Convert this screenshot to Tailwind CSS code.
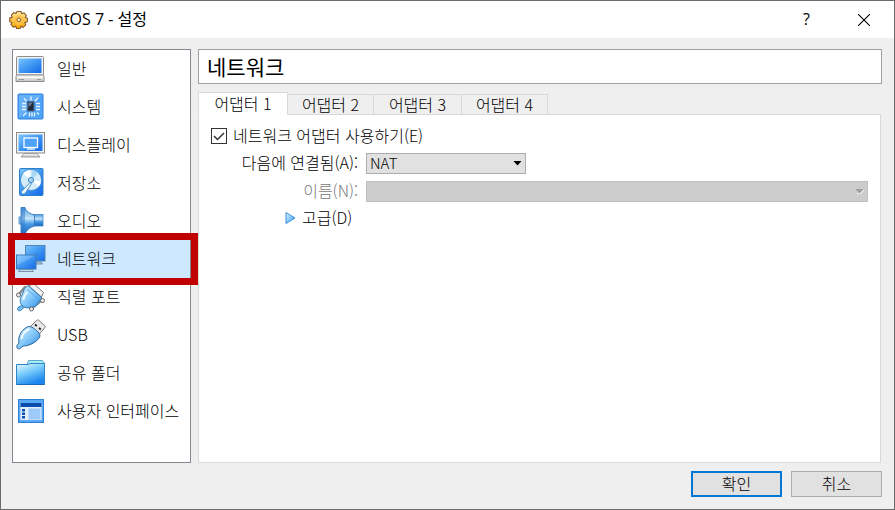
<!DOCTYPE html>
<html lang="ko">
<head>
    <meta charset="UTF-8">
    <meta name="viewport" content="width=device-width, initial-scale=1.0">
    <title>CentOS 7 - 설정</title>
    <script src="https://cdn.jsdelivr.net/npm/@tailwindcss/browser@4"></script>
</head>
<body class="h-screen flex flex-col border border-[#6b6b6b] bg-[#efefef] text-black text-base leading-6 font-light font-['Noto_Sans_CJK_KR',sans-serif]">

    <!-- Shared gradients for the icons -->
    <svg class="absolute size-0" aria-hidden="true">
        <defs>
            <linearGradient id="blue" x1="0" y1="0" x2="1" y2="1">
                <stop offset="0" stop-color="#7cc4fb"/>
                <stop offset="0.5" stop-color="#3f97f2"/>
                <stop offset="1" stop-color="#1268e8"/>
            </linearGradient>
            <linearGradient id="sky" x1="0" y1="0" x2="1" y2="1">
                <stop offset="0" stop-color="#e2f5ff"/>
                <stop offset="0.5" stop-color="#86cafa"/>
                <stop offset="1" stop-color="#2a86e0"/>
            </linearGradient>
            <linearGradient id="cone" x1="0" y1="0" x2="0" y2="1">
                <stop offset="0" stop-color="#4f9be0"/>
                <stop offset="0.4" stop-color="#c5e6fb"/>
                <stop offset="0.6" stop-color="#4a9be4"/>
                <stop offset="1" stop-color="#1462bd"/>
            </linearGradient>
            <linearGradient id="folder" x1="0" y1="0" x2="0.5" y2="1">
                <stop offset="0" stop-color="#f0fbff"/>
                <stop offset="0.45" stop-color="#7fd0fb"/>
                <stop offset="1" stop-color="#1a86ee"/>
            </linearGradient>
            <linearGradient id="metal" x1="0" y1="0" x2="0" y2="1">
                <stop offset="0" stop-color="#fdfdfd"/>
                <stop offset="1" stop-color="#c4c4c4"/>
            </linearGradient>
            <linearGradient id="gold" x1="0" y1="0" x2="0" y2="1">
                <stop offset="0" stop-color="#ffe9a0"/>
                <stop offset="1" stop-color="#f5a300"/>
            </linearGradient>
        </defs>
    </svg>

    <!-- Title bar -->
    <header class="h-[37px] shrink-0 bg-white flex items-center pl-2">
        <svg class="size-5" viewBox="0 0 20 20">
            <path d="M8 1.5l4 0 .7 2.2 2.3-.9 2.4 2.8-1.2 2 2.3 1-.3 3.4-2.3.4.8 2.4-2.6 2.6-2-1.1-1 2.2-3.6 0-.8-2.3-2.3 1-2.5-2.7 1-2.1-2.3-1 .2-3.5 2.4-.5-.8-2.2 2.4-2.6 2.2 1z" fill="url(#gold)" stroke="#8a5a2a" stroke-width="1.1" stroke-linejoin="round"/>
            <circle cx="10" cy="10" r="5" fill="#ffc247" opacity="0.8"/>
            <circle cx="9.8" cy="9.8" r="1.8" fill="#fff3d0" stroke="#8a5a2a" stroke-width="1"/>
        </svg>
        <h1 class="flex-1 pl-1.5 pb-0.5 font-normal font-['Open_Sans','Noto_Sans_CJK_KR',sans-serif]">CentOS 7 - 설정</h1>
        <button type="button" aria-label="도움말" class="w-[57px] h-full pb-0.5 font-normal font-['Open_Sans',sans-serif]">?</button>
        <button type="button" aria-label="닫기" class="w-[57px] h-full mr-0.5 flex items-center justify-center">
            <svg class="size-3" viewBox="0 0 12 12" fill="none" stroke="#000" stroke-width="1.1"><path d="M0 0l12 12M12 0L0 12"/></svg>
        </button>
    </header>

    <div class="flex-1 min-h-0 flex gap-[7px] pt-[11px] pl-[11px] pr-3">

        <!-- Category list -->
        <nav class="w-[179px] shrink-0 bg-white border border-[#828790]">
            <ul class="[&_a]:flex [&_a]:items-center [&_a]:gap-2.5 [&_a]:h-[38px] [&_a]:pl-0.5 [&_a]:whitespace-nowrap [&_svg]:size-8 [&_svg]:shrink-0 [&_span]:pb-0.5">
                <li><a href="#general">
                    <svg viewBox="0 0 32 32">
                        <rect x="1.5" y="3.5" width="27" height="18.5" rx="1" fill="#f4f4f4" stroke="#8b8b8b"/>
                        <rect x="3.5" y="5.5" width="23" height="14.5" fill="url(#blue)"/>
                        <path d="M2 22h26l1 1.5v5H1v-5z" fill="url(#metal)" stroke="#8b8b8b"/>
                        <path d="M3 24.5h24" stroke="#fff"/>
                        <path d="M4 26.5h5M22 26.5h4" stroke="#999"/>
                    </svg><span>일반</span></a></li>
                <li><a href="#system">
                    <svg viewBox="0 0 32 32">
                        <rect x="3" y="3" width="25" height="25" rx="1" fill="#4fa3f7" stroke="#2a7fdc"/>
                        <path d="M4 4h23L4 27z" fill="#7dbdf9" opacity="0.5"/>
                        <path d="M16 5.5v4M9 7.5l2.5 2.5M23 7l-3.5 3.5M7 12.5h4M7 15.5h4M7 18.5h4M21 12.5h4M21 15.5h4M21 18.5h4M8 25l3.5-3.5M14.5 21.5v4M17 21.5v4M19.5 21.5v4M22 21.5l2 2" stroke="#e2f2ff" stroke-width="1.4" fill="none"/>
                        <rect x="12.5" y="10.5" width="6.5" height="9.5" fill="#1f2a3a" stroke="#4b6a92"/>
                        <path d="M13.5 11.5h4.5l-4.5 5z" fill="#69809e"/>
                    </svg><span>시스템</span></a></li>
                <li><a href="#display">
                    <svg viewBox="0 0 32 32">
                        <rect x="1.5" y="3.5" width="28" height="20.5" fill="#f3f3f3" stroke="#8b8b8b"/>
                        <rect x="3.5" y="5.5" width="24" height="16.5" fill="url(#blue)"/>
                        <rect x="9" y="9" width="13.5" height="9.5" fill="#4fa3f7" stroke="#fff" stroke-width="1.3"/>
                        <path d="M12 20h8" stroke="#e2f2ff" stroke-width="1.5"/>
                        <path d="M9 24.5h13l3 3.5H6z" fill="url(#metal)" stroke="#8b8b8b" stroke-width="0.8"/>
                    </svg><span>디스플레이</span></a></li>
                <li><a href="#storage">
                    <svg viewBox="0 0 32 32">
                        <rect x="4.5" y="1.5" width="23.5" height="27" rx="1" fill="url(#blue)" stroke="#2a7fc8"/>
                        <circle cx="16" cy="13" r="10.5" fill="#d5edfb" stroke="#3b86c4" stroke-width="0.8"/>
                        <path d="M16 13L8 6.5a10 10 0 0 1 7-3.5zM16 13l8 6.5a10 10 0 0 0 2-5z" fill="#fff"/>
                        <path d="M16 13l1-10a10 10 0 0 1 6.5 3z" fill="#a9d8f6"/>
                        <circle cx="16" cy="13" r="2.6" fill="#a3d3f5" stroke="#3b86c4"/>
                        <path d="M15 15.5l1.5 1-6 9.500c-2 2-4.5 1-4-1.500z" fill="#f0f8ff" stroke="#3b86c4" stroke-width="0.9"/>
                    </svg><span>저장소</span></a></li>
                <li><a href="#audio">
                    <svg viewBox="0 0 32 32">
                        <rect x="4" y="12" width="3" height="7" fill="#8cc4ee" stroke="#3f8acb" stroke-width="0.8"/>
                        <rect x="17" y="9.5" width="11" height="11.5" fill="url(#cone)" stroke="#3f8acb" stroke-width="0.8"/>
                        <path d="M6 2.500h4c1 4 5 6 9.500 7.500v11c-4.500 1.500-8.500 4-9.500 9H6z" fill="url(#cone)" stroke="#2c6eb5" stroke-width="0.8"/>
                        <path d="M6 2.500h4v27H6z" fill="#2f78c8" opacity="0.5"/>
                    </svg><span>오디오</span></a></li>
                <li class="relative bg-[#cde8ff]"><a href="#network" aria-current="page">
                    <svg viewBox="0 0 32 32">
                        <path d="M16 19h10l1.5 2h-12z" fill="#b8cde0" stroke="#5f7f9f" stroke-width="0.8"/>
                        <rect x="10.5" y="2.5" width="19.5" height="15.5" fill="url(#blue)" stroke="#5285b3"/>
                        <path d="M5 26h12l1.5 2.5h-15z" fill="#c6d8e8" stroke="#5f7f9f" stroke-width="0.8"/>
                        <rect x="1.5" y="12" width="19.5" height="14" fill="url(#blue)" stroke="#3c78b4"/>
                        <path d="M2 12.5h18.5L2 22z" fill="#a8d8ff" opacity="0.35"/>
                    </svg><span>네트워크</span></a>
                    <!-- Highlight frame round the selected category -->
                    <div class="absolute -inset-x-[5px] -inset-y-[7px] -right-2 border-[7px] border-[#c00000] pointer-events-none"></div>
                </li>
                <li><a href="#serial">
                    <svg viewBox="0 0 32 32">
                        <path d="M14 5l4-3 10.500 9.500-2 4.500z" fill="#f3f3f3" stroke="#777"/>
                        <path d="M4 13l6-7M17 27l10-8" stroke="#8a8a8a" stroke-width="2.5" stroke-linecap="round"/>
                        <path d="M7 24.500l-4 2c-1.500 2 .5 4 2.500 3l4-3.500z" fill="#79bdf0" stroke="#2f7dbb"/>
                        <path d="M9.500 7.500L13 4.500 27 17l-3 3.500c-1 3-3.500 5.500-7 6-4 1-8.500 0-10.500-2.500-2-3-1.500-7 .5-10z" fill="url(#sky)" stroke="#2f7dbb"/>
                        <path d="M12 8l12 11" stroke="#4a9be4" stroke-width="0.8"/>
                        <path d="M8.500 19c0-3 1.500-5.500 4-8" stroke="#f2fbff" stroke-width="2" fill="none"/>
                        <circle cx="3.5" cy="14" r="2" fill="#eee" stroke="#666"/>
                        <circle cx="16.5" cy="28" r="2" fill="#eee" stroke="#666"/>
                        <circle cx="27.5" cy="19.5" r="2" fill="#eee" stroke="#666"/>
                    </svg><span>직렬 포트</span></a></li>
                <li><a href="#usb">
                    <svg viewBox="0 0 32 32">
                        <path d="M15.5 7.500l6-6c1-.8 1.500-.8 2.500 0l5.500 5c1 1 1 1.500 0 2.500L24 15.500z" fill="#e8e8e8" stroke="#777"/>
                        <path d="M20 5.500l1.800 1.500M24 9l1.800 1.500" stroke="#222" stroke-width="1.8"/>
                        <path d="M13.500 7.500c3-1 12 6 11.500 9.500C23.500 22 15 27 8 27l-3 2.500c-2 1-4-1-3-3L4 24C2.500 17.500 7 9.500 13.500 7.500z" fill="url(#sky)" stroke="#27639c"/>
                        <path d="M6.500 20c.5-5 3.500-8 8-10" stroke="#f2fbff" stroke-width="2" fill="none"/>
                    </svg><span>USB</span></a></li>
                <li><a href="#shared">
                    <svg viewBox="0 0 32 32">
                        <path d="M11.5 8.5l2-5h14l2 3v4h-18z" fill="#a5ecfb" stroke="#5fa9c8"/>
                        <path d="M1.5 7.5h11.5l2-1h14.500V27.500h-28z" fill="url(#folder)" stroke="#2c86c8"/>
                        <path d="M1.5 27.5h28" stroke="#1d6bb8"/>
                    </svg><span>공유 폴더</span></a></li>
                <li><a href="#ui">
                    <svg viewBox="0 0 32 32">
                        <rect x="3.5" y="4.5" width="25" height="23" fill="#5ba8f5" stroke="#2f7fd6"/>
                        <rect x="5.5" y="8" width="21" height="17" fill="#e4f0ff"/>
                        <rect x="5.5" y="8" width="21" height="4" fill="#0b4fae"/>
                        <path d="M7 14h3v2.5H7zM7 17.5h3V20H7zM7 21h3v2.5H7z" fill="#0b4fae"/>
                        <rect x="13.5" y="13.5" width="12" height="11" fill="#9dc9fb"/>
                    </svg><span>사용자 인터페이스</span></a></li>
            </ul>
        </nav>

        <!-- Settings page -->
        <main class="flex-1 min-w-0 flex flex-col">
            <h2 class="h-[35px] shrink-0 mb-2 flex items-center pl-2 pb-0.5 bg-white border border-[#a0a0a0] text-[21px] font-normal">네트워크</h2>

            <div role="tablist" class="flex items-end h-[23px] shrink-0 -mb-px z-10 [&>button]:border [&>button]:border-[#d9d9d9] [&>button]:pb-0.5">
                <button type="button" role="tab" aria-selected="true" class="w-[90px] h-[23px] bg-white border-b-white! flex items-center justify-center">어댑터 1</button>
                <button type="button" role="tab" aria-selected="false" class="w-[87px] h-[21px] -ml-px flex items-center justify-center">어댑터 2</button>
                <button type="button" role="tab" aria-selected="false" class="w-[89px] h-[21px] -ml-px flex items-center justify-center">어댑터 3</button>
                <button type="button" role="tab" aria-selected="false" class="w-[87px] h-[21px] -ml-px flex items-center justify-center">어댑터 4</button>
            </div>

            <form class="flex-1 mr-px bg-white border border-[#d9d9d9] px-3 pt-[9px] [&_label]:pb-0.5 [&_label]:leading-[22px]">
                <div class="flex items-center gap-1.5 h-6 mb-[3px]">
                    <input id="enable" type="checkbox" checked class="appearance-none size-4 shrink-0 border border-[#333] bg-white bg-[url('data:image/svg+xml,%3Csvg%20xmlns=%22http://www.w3.org/2000/svg%22%20viewBox=%220%200%2014%2014%22%3E%3Cpath%20d=%22M2%207l3.500%203.500L12%204%22%20fill=%22none%22%20stroke=%22%23333%22%20stroke-width=%221.500%22/%3E%3C/svg%3E')]">
                    <label for="enable">네트워크 어댑터 사용하기(E)</label>
                </div>
                <div class="grid grid-cols-[147px_1fr] gap-x-2 gap-y-1 items-center">
                    <label for="attached" class="text-right whitespace-nowrap">다음에 연결됨(A):</label>
                    <div class="relative w-40">
                        <select id="attached" class="block appearance-none w-full h-[21px] pl-[3px] pb-0.5 bg-[#e1e1e1] border border-[#adadad] text-[15px] leading-[17px]">
                            <option>NAT</option>
                        </select>
                        <svg class="absolute right-1 top-2 w-[9px] h-[5px] pointer-events-none" viewBox="0 0 9 5"><path d="M0.5 0h8l-4 4.5z" fill="#000"/></svg>
                    </div>

                    <label for="name" class="text-right text-[#787878]">이름(N):</label>
                    <div class="relative">
                        <select id="name" disabled class="block appearance-none w-full h-[21px] bg-[#cccccc] border border-[#bfbfbf] opacity-100"></select>
                        <svg class="absolute right-1 top-2 w-[9px] h-[5px] pointer-events-none" viewBox="0 0 9 5"><path d="M1.5 5h3.5l4-4" stroke="#fff" fill="none"/><path d="M0.5 0h8l-4 4.5z" fill="#a0a0a0"/></svg>
                    </div>
                </div>
                <button type="button" class="flex items-center gap-1.5 h-6 mt-[3px] pl-[74px]">
                    <svg class="w-[11px] h-3" viewBox="0 0 11 12"><path d="M1 0.5l9 5.5-9 5.5z" fill="url(#sky)" stroke="#3a8fd8"/></svg>
                    <span class="pb-0.5">고급(D)</span>
                </button>
            </form>
        </main>
    </div>

    <!-- Dialog buttons -->
    <footer class="shrink-0 flex justify-end gap-[9px] pt-2 pb-3 pr-3">
        <button type="button" class="w-[91px] h-[26px] pb-0.5 flex items-center justify-center bg-[#e1e1e1] border-2 border-[#0078d7]">확인</button>
        <button type="button" class="w-[91px] h-[26px] pb-0.5 flex items-center justify-center bg-[#e1e1e1] border border-[#adadad]">취소</button>
    </footer>

</body>
</html>
